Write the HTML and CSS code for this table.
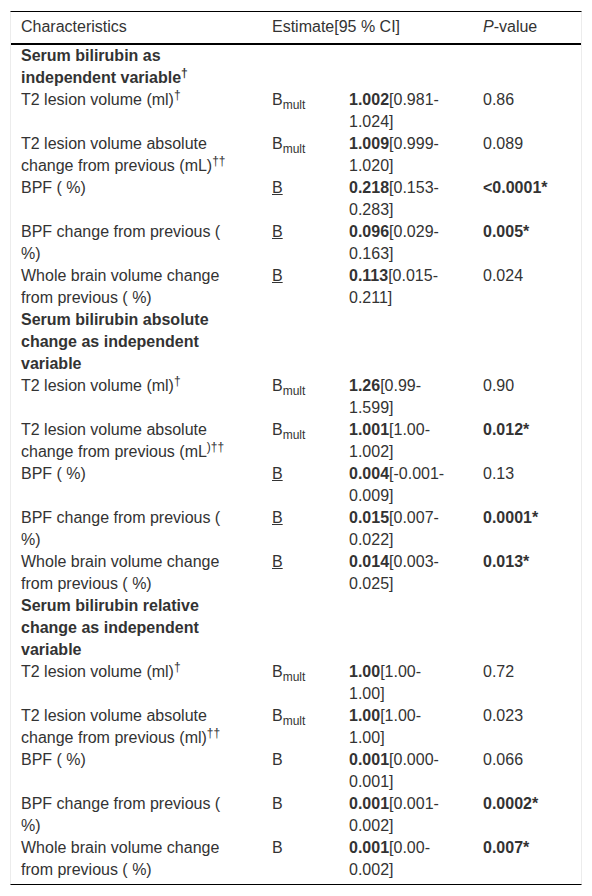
FILE: index.html
```html
<!DOCTYPE html>
<html lang="en">
<head>
    <meta charset="UTF-8">
    <meta name="viewport" content="width=device-width, initial-scale=1.0">
    <title>Serum bilirubin and MRI outcomes</title>
    <link rel="stylesheet" href="styles.css">
</head>
<body>
    <div class="table-wrap">
        <table class="data">
            <colgroup>
                <col class="col-name">
                <col class="col-coef">
                <col class="col-est">
                <col class="col-p">
            </colgroup>
            <thead>
                <tr>
                    <th>Characteristics</th>
                    <th colspan="2">Estimate[95 % CI]</th>
                    <th><i>P</i>-value</th>
                </tr>
            </thead>
            <tbody>
                <tr>
                    <td class="name section">Serum bilirubin as independent variable<sup>†</sup></td>
                    <td colspan="3"></td>
                </tr>
                <tr>
                    <td class="name">T2 lesion volume (ml)<sup>†</sup></td>
                    <td>B<sub>mult</sub></td>
                    <td class="est"><b>1.002</b>[0.981-<wbr>1.024]</td>
                    <td>0.86</td>
                </tr>
                <tr>
                    <td class="name">T2 lesion volume absolute change from previous (mL)<sup>††</sup></td>
                    <td>B<sub>mult</sub></td>
                    <td class="est"><b>1.009</b>[0.999-<wbr>1.020]</td>
                    <td>0.089</td>
                </tr>
                <tr>
                    <td class="name">BPF ( %)</td>
                    <td><u>B</u></td>
                    <td class="est"><b>0.218</b>[0.153-<wbr>0.283]</td>
                    <td><b>&lt;0.0001*</b></td>
                </tr>
                <tr>
                    <td class="name">BPF change from previous ( %)</td>
                    <td><u>B</u></td>
                    <td class="est"><b>0.096</b>[0.029-<wbr>0.163]</td>
                    <td><b>0.005*</b></td>
                </tr>
                <tr>
                    <td class="name">Whole brain volume change from previous ( %)</td>
                    <td><u>B</u></td>
                    <td class="est"><b>0.113</b>[0.015-<wbr>0.211]</td>
                    <td>0.024</td>
                </tr>

                <tr>
                    <td class="name section">Serum bilirubin absolute change as independent variable</td>
                    <td colspan="3"></td>
                </tr>
                <tr>
                    <td class="name">T2 lesion volume (ml)<sup>†</sup></td>
                    <td>B<sub>mult</sub></td>
                    <td class="est"><b>1.26</b>[0.99-<wbr>1.599]</td>
                    <td>0.90</td>
                </tr>
                <tr>
                    <td class="name">T2 lesion volume absolute change from previous (mL<sup>)††</sup></td>
                    <td>B<sub>mult</sub></td>
                    <td class="est"><b>1.001</b>[1.00-<wbr>1.002]</td>
                    <td><b>0.012*</b></td>
                </tr>
                <tr>
                    <td class="name">BPF ( %)</td>
                    <td><u>B</u></td>
                    <td class="est"><b>0.004</b>[-0.001-<wbr>0.009]</td>
                    <td>0.13</td>
                </tr>
                <tr>
                    <td class="name">BPF change from previous ( %)</td>
                    <td><u>B</u></td>
                    <td class="est"><b>0.015</b>[0.007-<wbr>0.022]</td>
                    <td><b>0.0001*</b></td>
                </tr>
                <tr>
                    <td class="name">Whole brain volume change from previous ( %)</td>
                    <td><u>B</u></td>
                    <td class="est"><b>0.014</b>[0.003-<wbr>0.025]</td>
                    <td><b>0.013*</b></td>
                </tr>

                <tr>
                    <td class="name section">Serum bilirubin relative change as independent variable</td>
                    <td colspan="3"></td>
                </tr>
                <tr>
                    <td class="name">T2 lesion volume (ml)<sup>†</sup></td>
                    <td>B<sub>mult</sub></td>
                    <td class="est"><b>1.00</b>[1.00-<wbr>1.00]</td>
                    <td>0.72</td>
                </tr>
                <tr>
                    <td class="name">T2 lesion volume absolute change from previous (ml)<sup>††</sup></td>
                    <td>B<sub>mult</sub></td>
                    <td class="est"><b>1.00</b>[1.00-<wbr>1.00]</td>
                    <td>0.023</td>
                </tr>
                <tr>
                    <td class="name">BPF ( %)</td>
                    <td>B</td>
                    <td class="est"><b>0.001</b>[0.000-<wbr>0.001]</td>
                    <td>0.066</td>
                </tr>
                <tr>
                    <td class="name">BPF change from previous ( %)</td>
                    <td>B</td>
                    <td class="est"><b>0.001</b>[0.001-<wbr>0.002]</td>
                    <td><b>0.0002*</b></td>
                </tr>
                <tr>
                    <td class="name">Whole brain volume change from previous ( %)</td>
                    <td>B</td>
                    <td class="est"><b>0.001</b>[0.00-<wbr>0.002]</td>
                    <td><b>0.007*</b></td>
                </tr>
            </tbody>
        </table>
    </div>
</body>
</html>
```

FILE: styles.css
```css
body {
    margin: 0;
    font-family: "Liberation Sans", Arial, sans-serif;
    font-size: 16px;
    line-height: 22px;
    color: #333;
    background-color: #ffffff;
}
.table-wrap {
    padding: 11px 10px 0;
}
.data {
    width: 572px;
    table-layout: fixed;
    border-collapse: separate;
    border-spacing: 0;
    border-top: 1px solid #000;
    border-bottom: 1px solid #000;
    border-left: 1px solid #ececec;
    border-right: 1px solid #ececec;
}
.col-name {
    width: 250px;
}
.col-coef {
    width: 77px;
}
.col-est {
    width: 134px;
}
.col-p {
    width: 109px;
}
th, td {
    padding: 0 0 0 11px;
    text-align: left;
    vertical-align: top;
}
th {
    font-weight: normal;
    padding-top: 4px;
    padding-bottom: 5px;
    border-bottom: 2px solid #000;
}
th:first-child, .name {
    padding-left: 10px;
}
.name {
    padding-right: 30px;
}
.section {
    font-weight: bold;
}
.est {
    padding-right: 23px;
}
tbody tr:last-child td {
    padding-bottom: 3px;
}
sup, sub {
    font-size: 12px;
    line-height: 0;
}
```
